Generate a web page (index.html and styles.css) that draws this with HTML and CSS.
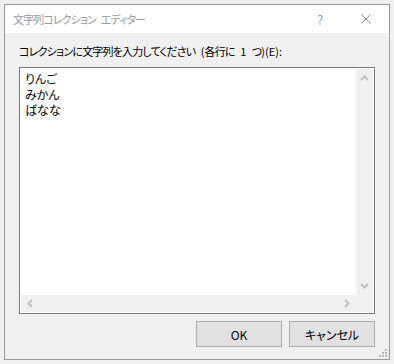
FILE: index.html
```html
<!DOCTYPE html>
<html lang="ja">
<head>
    <meta charset="UTF-8">
    <title>文字列コレクション エディター</title>
    <link rel="stylesheet" href="styles.css">
</head>
<body>
    <div class="window">
        <div class="titlebar">
            <span class="title">文字列コレクション エディター</span>
            <span class="tbtn help">?</span>
            <span class="tbtn close">
                <svg width="10" height="10" viewBox="0 0 10 10"><path d="M0.5 0.5L9.5 9.5M9.5 0.5L0.5 9.5" stroke="#8c8c8c" stroke-width="1" fill="none"/></svg>
            </span>
        </div>
        <div class="client">
            <div class="label"><span class="ja">コレクションに文字列を入力してください</span> (<span class="ja">各行に</span> 1 <span class="ja">つ</span>)(E):</div>
            <div class="textbox">
                <div class="tb-inner">
                    <div class="lines">りんご<br>みかん<br>ばなな</div>
                    <div class="vscroll">
                        <svg width="9" height="6" viewBox="0 0 9 6"><path d="M1 5L4.5 1.5L8 5" stroke="#c2c2c2" stroke-width="2" fill="none"/></svg>
                        <svg width="9" height="6" viewBox="0 0 9 6"><path d="M1 1L4.5 4.5L8 1" stroke="#c2c2c2" stroke-width="2" fill="none"/></svg>
                    </div>
                    <div class="hscroll">
                        <svg width="6" height="9" viewBox="0 0 6 9"><path d="M5 1L1.5 4.5L5 8" stroke="#c2c2c2" stroke-width="2" fill="none"/></svg>
                        <svg width="6" height="9" viewBox="0 0 6 9"><path d="M1 1L4.5 4.5L1 8" stroke="#c2c2c2" stroke-width="2" fill="none"/></svg>
                    </div>
                    <div class="corner"></div>
                </div>
            </div>
            <div class="buttons">
                <button class="btn">OK</button>
                <button class="btn">キャンセル</button>
            </div>
        </div>
        <svg class="grip" width="8" height="8" viewBox="0 0 8 8">
            <rect x="6" y="0" width="2" height="2" fill="#b8b8b8"/>
            <rect x="3" y="3" width="2" height="2" fill="#b8b8b8"/>
            <rect x="6" y="3" width="2" height="2" fill="#b8b8b8"/>
            <rect x="0" y="6" width="2" height="2" fill="#b8b8b8"/>
            <rect x="3" y="6" width="2" height="2" fill="#b8b8b8"/>
            <rect x="6" y="6" width="2" height="2" fill="#b8b8b8"/>
        </svg>
    </div>
</body>
</html>
```
FILE: styles.css
```css
* {margin: 0; padding: 0; box-sizing: border-box;}
body {
    background: #f0f0f0; padding: 4px;
    font-family: "Noto Sans CJK JP", "Noto Sans", sans-serif; font-size: 12px;
    font-feature-settings: "palt";
}
.window {
    position: relative; width: 386px; height: 356px;
    border: 1px solid #9b9b9b; background: #f0f0f0;
    display: flex; flex-direction: column;
}
.titlebar {height: 28px; background: #fff; display: flex; align-items: center; padding-left: 8px;}
.titlebar .title {color: #999; flex: 1; font-size: 11px; letter-spacing: -0.9px; word-spacing: 3px;}
.titlebar .tbtn {width: 46px; height: 28px; display: flex; align-items: center; justify-content: center;}
.titlebar .help {color: #999; font-size: 13px;}
.client {padding: 10px 14px 0; display: flex; flex-direction: column;}
.label {line-height: 16px; color: #000; font-size: 11px; word-spacing: 3px;}
.label .ja {letter-spacing: -0.8px;}
.textbox {margin-top: 8px; height: 247px; border: 1px solid #7a7a7a; background: #fff; padding: 1px;}
.tb-inner {height: 100%; display: grid; grid-template-columns: 1fr 17px; grid-template-rows: 1fr 17px;}
.lines {padding: 2px 4px; line-height: 15.5px; color: #000;}
.vscroll {background: #f0f0f0; display: flex; flex-direction: column; justify-content: space-between; align-items: center; padding: 6px 0;}
.hscroll {background: #f0f0f0; display: flex; justify-content: space-between; align-items: center; padding: 0 6px;}
.corner {background: #f0f0f0;}
.buttons {margin-top: 7px; display: flex; justify-content: flex-end; gap: 7px;}
.btn {
    width: 86px; height: 26px; border: 1px solid #adadad; background: #e1e1e1;
    font: inherit; color: #000;
}
.grip {position: absolute; right: 2px; bottom: 2px;}
```
